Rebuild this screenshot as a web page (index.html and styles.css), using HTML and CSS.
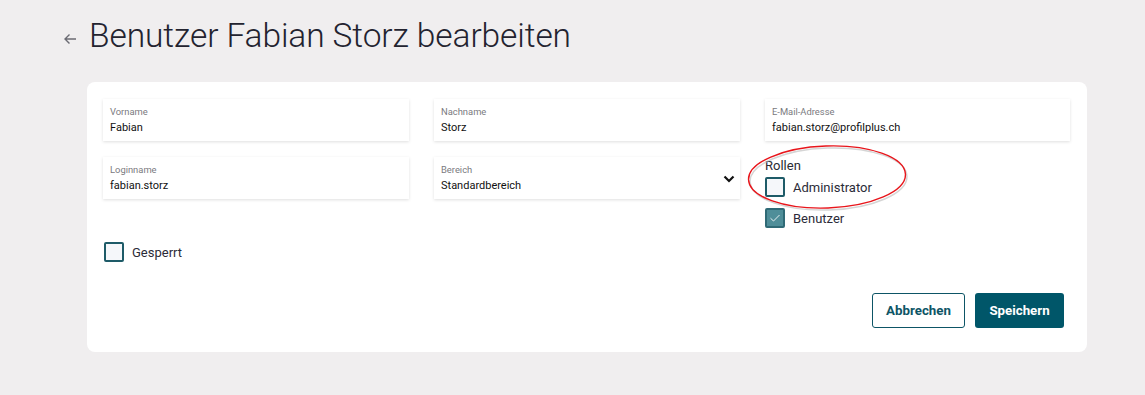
FILE: index.html
```html
<!DOCTYPE html>
<html lang="de">
<head>
    <meta charset="UTF-8">
    <title>Benutzer bearbeiten</title>
    <link rel="stylesheet" href="styles.css">
</head>
<body>
    <div class="kopf">
        <svg class="zurueck" width="14" height="12" viewBox="0 0 14 12"><path d="M13 6 H2 M6.5 1.5 L2 6 L6.5 10.5" fill="none" stroke="#6b6b73" stroke-width="1.4"/></svg>
        <h1>Benutzer Fabian Storz bearbeiten</h1>
    </div>

    <div class="karte">
        <div class="raster">
            <div class="feld">
                <label>Vorname</label>
                <div class="wert">Fabian</div>
            </div>
            <div class="feld">
                <label>Nachname</label>
                <div class="wert">Storz</div>
            </div>
            <div class="feld">
                <label>E-Mail-Adresse</label>
                <div class="wert">fabian.storz@profilplus.ch</div>
            </div>
            <div class="feld">
                <label>Loginname</label>
                <div class="wert">fabian.storz</div>
            </div>
            <div class="feld auswahl">
                <label>Bereich</label>
                <div class="wert">Standardbereich</div>
                <svg class="pfeil" width="12" height="8" viewBox="0 0 12 8"><path d="M1.5 1.5 L6 6 L10.5 1.5" fill="none" stroke="#111" stroke-width="2.2"/></svg>
            </div>
            <div class="rollen">
                <div class="rollen-titel">Rollen</div>
                <div class="check-zeile">
                    <span class="box"></span>
                    <span>Administrator</span>
                </div>
                <div class="check-zeile">
                    <span class="box an">
                        <svg width="12" height="10" viewBox="0 0 12 10"><path d="M1.5 5.2 L4.5 8 L10.5 2" fill="none" stroke="#e6f0f2" stroke-width="1"/></svg>
                    </span>
                    <span>Benutzer</span>
                </div>
                <svg class="markierung" width="172" height="76" viewBox="0 0 172 76">
                    <ellipse cx="85" cy="36" rx="78.5" ry="31" fill="none" stroke="#b9b9b9" stroke-width="1.5" transform="translate(1.5 2) rotate(-2 85 36)" opacity="0.6"/>
                    <ellipse cx="85" cy="36" rx="78.5" ry="31" fill="none" stroke="#e8151b" stroke-width="1.4" transform="rotate(-2 85 36)"/>
                </svg>
            </div>
        </div>

        <div class="check-zeile gesperrt">
            <span class="box"></span>
            <span>Gesperrt</span>
        </div>

        <div class="aktionen">
            <button class="knopf sekundaer">Abbrechen</button>
            <button class="knopf primaer">Speichern</button>
        </div>
    </div>
</body>
</html>
```

FILE: styles.css
```css
body {
    margin: 0;
    background-color: #f0eeef;
    font-family: Roboto, "Liberation Sans", sans-serif;
    color: #1f1f2b;
}
.kopf {
    display: flex;
    align-items: center;
    padding: 13px 0 0 63px;
    height: 45px;
}
.zurueck {
    margin-right: 12px;
    margin-top: 6px;
}
h1 {
    margin: 0;
    font-size: 33.5px;
    font-weight: 300;
    color: #23232f;
    letter-spacing: -0.1px;
}
.karte {
    position: relative;
    background-color: #fff;
    border-radius: 8px;
    margin: 24px 58px 0 87px;
    padding: 17px 17px 24px 16px;
    height: 229px;
}
.raster {
    display: grid;
    grid-template-columns: 306px 306px 305px;
    column-gap: 25px;
    row-gap: 16px;
}
.feld {
    position: relative;
    height: 42px;
    box-sizing: border-box;
    padding: 8px 7px 0;
    box-shadow: 0 1px 3px rgba(0, 0, 0, 0.13);
    background: #fff;
}
.feld label {
    display: block;
    font-size: 9.4px;
    color: #7a7a80;
    line-height: 10px;
}
.feld .wert {
    font-size: 11px;
    color: #111;
    margin-top: 4px;
    line-height: 13px;
}
.auswahl .pfeil {
    position: absolute;
    right: 5px;
    top: 18px;
}
.rollen {
    position: relative;
    height: 42px;
    padding-top: 2px;
}
.rollen-titel {
    font-size: 13px;
    color: #2b2b33;
    line-height: 14px;
    margin-bottom: 4px;
}
.check-zeile {
    display: flex;
    align-items: center;
    font-size: 13px;
    color: #2b2b38;
    height: 20px;
    margin-bottom: 11px;
}
.box {
    width: 20px;
    height: 20px;
    box-sizing: border-box;
    border: 2px solid #1e5b68;
    border-radius: 2px;
    background: #f5f7fa;
    margin-right: 8px;
    display: flex;
    align-items: center;
    justify-content: center;
}
.box.an {
    background: #4f8e99;
    border-color: #2f6a76;
}
.markierung {
    position: absolute;
    left: -23px;
    top: -16px;
}
.gesperrt {
    margin-top: 41px;
    margin-left: 1px;
}
.aktionen {
    display: flex;
    justify-content: flex-end;
    gap: 10px;
    margin-top: 31px;
    margin-right: 6px;
}
.knopf {
    height: 35px;
    box-sizing: border-box;
    border-radius: 3px;
    font-family: Roboto, "Liberation Sans", sans-serif;
    font-size: 13.3px;
    font-weight: bold;
    padding: 0 10px;
    cursor: pointer;
}
.sekundaer {
    background: #fff;
    color: #0d5566;
    border: 1px solid #0d5566;
    width: 93px;
}
.primaer {
    background: #005669;
    color: #fff;
    border: none;
    width: 89px;
}
```
